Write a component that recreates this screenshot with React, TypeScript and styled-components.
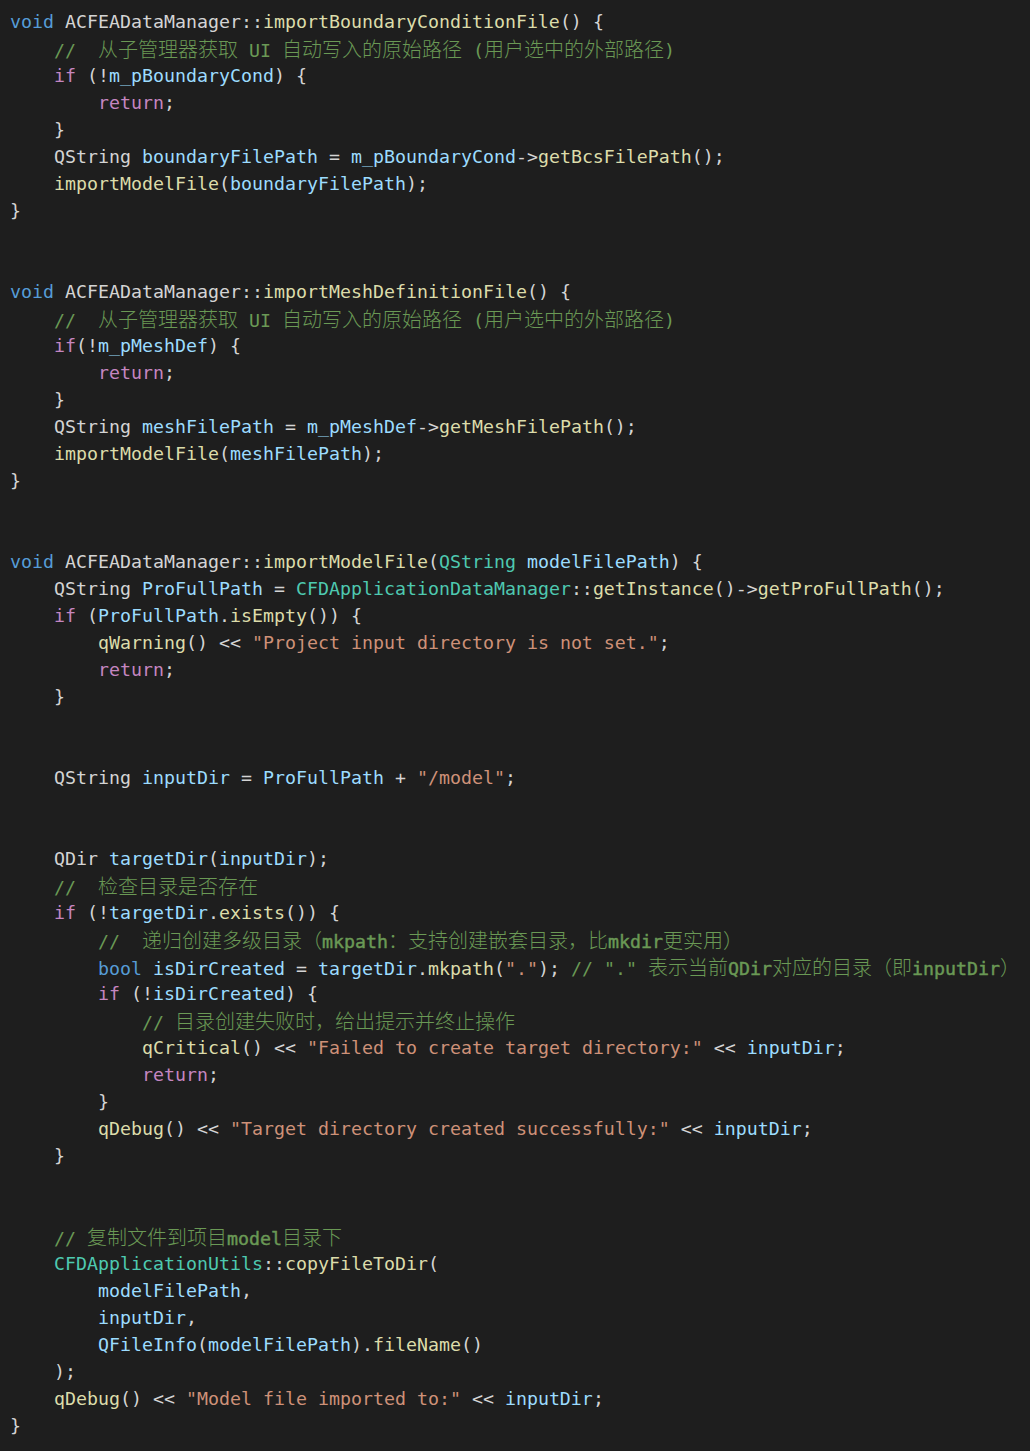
import React from "react";
import styled, { createGlobalStyle } from "styled-components";

const Global = createGlobalStyle`
  html, body {
    margin: 0;
    padding: 0;
    background: #1e1e1e;
  }
  body {
    min-height: 1451px;
  }
`;

const Editor = styled.pre`
  margin: 0;
  padding: 8px 0 12px 10px;
  background: #1e1e1e;
  color: #d4d4d4;
  font-family: "DejaVu Sans Mono", "Liberation Mono", monospace;
  font-size: 18.27px;
  line-height: 27px;
  min-height: 1431px;
`;

const Line = styled.div<{ $indent?: number }>`
  height: 27px;
  white-space: pre;
  padding-left: ${(p) => (p.$indent ?? 0) * 44}px;
`;

const Kw = styled.span`color: #569cd6;`;
const Ctl = styled.span`color: #c586c0;`;
const Fn = styled.span`color: #dcdcaa;`;
const Var = styled.span`color: #9cdcfe;`;
const Type = styled.span`color: #4ec9b0;`;
const Str = styled.span`color: #ce9178;`;
const Cmt = styled.span`color: #6a9955;`;
const Han = styled.span`
  font-family: "Noto Sans CJK SC", sans-serif;
  font-size: 20px;
  font-weight: 300;
`;
const Bold = styled.span`
  -webkit-text-stroke: 0.45px currentColor;
`;

const Blank = () => <Line> </Line>;

const HeaderComment = () => (
  <Line $indent={1}>
    <Cmt>
      {"//  "}
      <Han>从子管理器获取</Han>
      {" UI "}
      <Han>自动写入的原始路径</Han>
      {" ("}
      <Han>用户选中的外部路径</Han>
      {")"}
    </Cmt>
  </Line>
);

export default function App() {
  return (
    <>
      <Global />
      <Editor>
        <Line>
          <Kw>void</Kw> ACFEADataManager::<Fn>importBoundaryConditionFile</Fn>() {"{"}
        </Line>
        <HeaderComment />
        <Line $indent={1}>
          <Ctl>if</Ctl> (!<Var>m_pBoundaryCond</Var>) {"{"}
        </Line>
        <Line $indent={2}>
          <Ctl>return</Ctl>;
        </Line>
        <Line $indent={1}>{"}"}</Line>
        <Line $indent={1}>
          QString <Var>boundaryFilePath</Var> = <Var>m_pBoundaryCond</Var>-&gt;<Fn>getBcsFilePath</Fn>();
        </Line>
        <Line $indent={1}>
          <Fn>importModelFile</Fn>(<Var>boundaryFilePath</Var>);
        </Line>
        <Line>{"}"}</Line>
        <Blank />
        <Blank />
        <Line>
          <Kw>void</Kw> ACFEADataManager::<Fn>importMeshDefinitionFile</Fn>() {"{"}
        </Line>
        <HeaderComment />
        <Line $indent={1}>
          <Ctl>if</Ctl>(!<Var>m_pMeshDef</Var>) {"{"}
        </Line>
        <Line $indent={2}>
          <Ctl>return</Ctl>;
        </Line>
        <Line $indent={1}>{"}"}</Line>
        <Line $indent={1}>
          QString <Var>meshFilePath</Var> = <Var>m_pMeshDef</Var>-&gt;<Fn>getMeshFilePath</Fn>();
        </Line>
        <Line $indent={1}>
          <Fn>importModelFile</Fn>(<Var>meshFilePath</Var>);
        </Line>
        <Line>{"}"}</Line>
        <Blank />
        <Blank />
        <Line>
          <Kw>void</Kw> ACFEADataManager::<Fn>importModelFile</Fn>(<Type>QString</Type> <Var>modelFilePath</Var>) {"{"}
        </Line>
        <Line $indent={1}>
          QString <Var>ProFullPath</Var> = <Type>CFDApplicationDataManager</Type>::<Fn>getInstance</Fn>()-&gt;<Fn>getProFullPath</Fn>();
        </Line>
        <Line $indent={1}>
          <Ctl>if</Ctl> (<Var>ProFullPath</Var>.<Fn>isEmpty</Fn>()) {"{"}
        </Line>
        <Line $indent={2}>
          <Fn>qWarning</Fn>() &lt;&lt; <Str>"Project input directory is not set."</Str>;
        </Line>
        <Line $indent={2}>
          <Ctl>return</Ctl>;
        </Line>
        <Line $indent={1}>{"}"}</Line>
        <Blank />
        <Blank />
        <Line $indent={1}>
          QString <Var>inputDir</Var> = <Var>ProFullPath</Var> + <Str>"/model"</Str>;
        </Line>
        <Blank />
        <Blank />
        <Line $indent={1}>
          QDir <Var>targetDir</Var>(<Var>inputDir</Var>);
        </Line>
        <Line $indent={1}>
          <Cmt>
            {"//  "}
            <Han>检查目录是否存在</Han>
          </Cmt>
        </Line>
        <Line $indent={1}>
          <Ctl>if</Ctl> (!<Var>targetDir</Var>.<Fn>exists</Fn>()) {"{"}
        </Line>
        <Line $indent={2}>
          <Cmt>
            {"//  "}
            <Han>递归创建多级目录（</Han>
            <Bold>mkpath</Bold>
            <Han>：支持创建嵌套目录，比</Han>
            <Bold>mkdir</Bold>
            <Han>更实用）</Han>
          </Cmt>
        </Line>
        <Line $indent={2}>
          <Kw>bool</Kw> <Var>isDirCreated</Var> = <Var>targetDir</Var>.<Fn>mkpath</Fn>(<Str>"."</Str>);{" "}
          <Cmt>
            {'// "." '}
            <Han>表示当前</Han>
            <Bold>QDir</Bold>
            <Han>对应的目录（即</Han>
            <Bold>inputDir</Bold>
            <Han>）</Han>
          </Cmt>
        </Line>
        <Line $indent={2}>
          <Ctl>if</Ctl> (!<Var>isDirCreated</Var>) {"{"}
        </Line>
        <Line $indent={3}>
          <Cmt>
            {"// "}
            <Han>目录创建失败时，给出提示并终止操作</Han>
          </Cmt>
        </Line>
        <Line $indent={3}>
          <Fn>qCritical</Fn>() &lt;&lt; <Str>"Failed to create target directory:"</Str> &lt;&lt; <Var>inputDir</Var>;
        </Line>
        <Line $indent={3}>
          <Ctl>return</Ctl>;
        </Line>
        <Line $indent={2}>{"}"}</Line>
        <Line $indent={2}>
          <Fn>qDebug</Fn>() &lt;&lt; <Str>"Target directory created successfully:"</Str> &lt;&lt; <Var>inputDir</Var>;
        </Line>
        <Line $indent={1}>{"}"}</Line>
        <Blank />
        <Blank />
        <Line $indent={1}>
          <Cmt>
            {"// "}
            <Han>复制文件到项目</Han>
            <Bold>model</Bold>
            <Han>目录下</Han>
          </Cmt>
        </Line>
        <Line $indent={1}>
          <Type>CFDApplicationUtils</Type>::<Fn>copyFileToDir</Fn>(
        </Line>
        <Line $indent={2}>
          <Var>modelFilePath</Var>,
        </Line>
        <Line $indent={2}>
          <Var>inputDir</Var>,
        </Line>
        <Line $indent={2}>
          <Var>QFileInfo</Var>(<Var>modelFilePath</Var>).<Fn>fileName</Fn>()
        </Line>
        <Line $indent={1}>);</Line>
        <Line $indent={1}>
          <Fn>qDebug</Fn>() &lt;&lt; <Str>"Model file imported to:"</Str> &lt;&lt; <Var>inputDir</Var>;
        </Line>
        <Line>{"}"}</Line>
      </Editor>
    </>
  );
}
